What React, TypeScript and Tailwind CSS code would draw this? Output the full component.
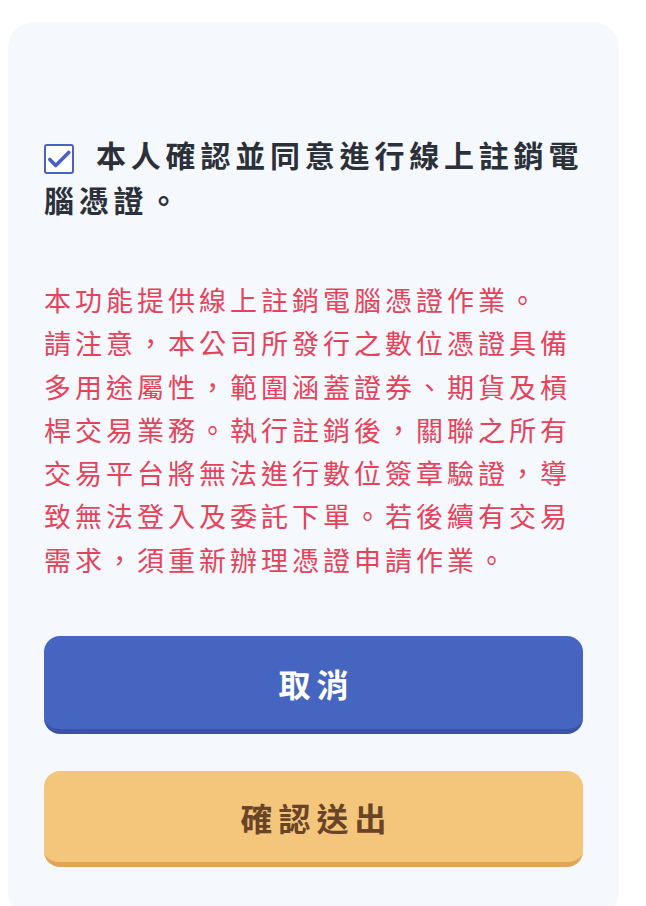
import React from 'react';

const cjk = { fontFamily: '"Noto Sans CJK TC", "Noto Sans", sans-serif' };

const notice = [
  '本功能提供線上註銷電腦憑證作業。',
  '請注意，本公司所發行之數位憑證具備',
  '多用途屬性，範圍涵蓋證券、期貨及槓',
  '桿交易業務。執行註銷後，關聯之所有',
  '交易平台將無法進行數位簽章驗證，導',
  '致無法登入及委託下單。若後續有交易',
  '需求，須重新辦理憑證申請作業。',
];

function CheckBox() {
  return (
    <span className="inline-flex items-center justify-center w-[30px] h-[30px] align-[-5px] mr-[22px] rounded-[3px] border-[2.5px] border-[#4a62c2] bg-white">
      <svg viewBox="0 0 24 24" className="w-[26px] h-[26px]" fill="none" stroke="#4a62c2" strokeWidth="3.4" strokeLinecap="round" strokeLinejoin="round">
        <path d="M3.5 12.5l5.5 5.5L21 6" />
      </svg>
    </span>
  );
}

export default function App() {
  return (
    <div className="h-[906px] bg-white pt-[22px] pl-[8px] pr-[27px] overflow-hidden" style={cjk}>
      <div className="bg-[#f5f8fd] rounded-[26px] h-[896px] px-[36px] pt-[110px]">
        <div className="text-[30px] leading-[45px] font-semibold text-[#2c3039] tracking-[4.8px]">
          <div className="whitespace-nowrap">
            <CheckBox />
            本人確認並同意進行線上註銷電
          </div>
          <div>腦憑證。</div>
        </div>

        <div className="mt-[56px] text-[27px] leading-[43.3px] text-[#e4435a] tracking-[4px]">
          {notice.map((line) => (
            <div key={line} className="whitespace-nowrap">{line}</div>
          ))}
        </div>

        <div className="mt-[55px] flex flex-col gap-[37px]">
          <button className="h-[98px] w-full rounded-[16px] bg-[#4665c0] border-b-[5px] border-[#3a52a8] text-white text-[32px] font-bold tracking-[6px] pl-[6px]">
            取消
          </button>
          <button className="h-[96px] w-full rounded-[16px] bg-[#f3c67c] border-b-[5px] border-[#e2a555] text-[#6a4427] text-[32px] font-bold tracking-[6px] pl-[6px]">
            確認送出
          </button>
        </div>
      </div>
    </div>
  );
}
